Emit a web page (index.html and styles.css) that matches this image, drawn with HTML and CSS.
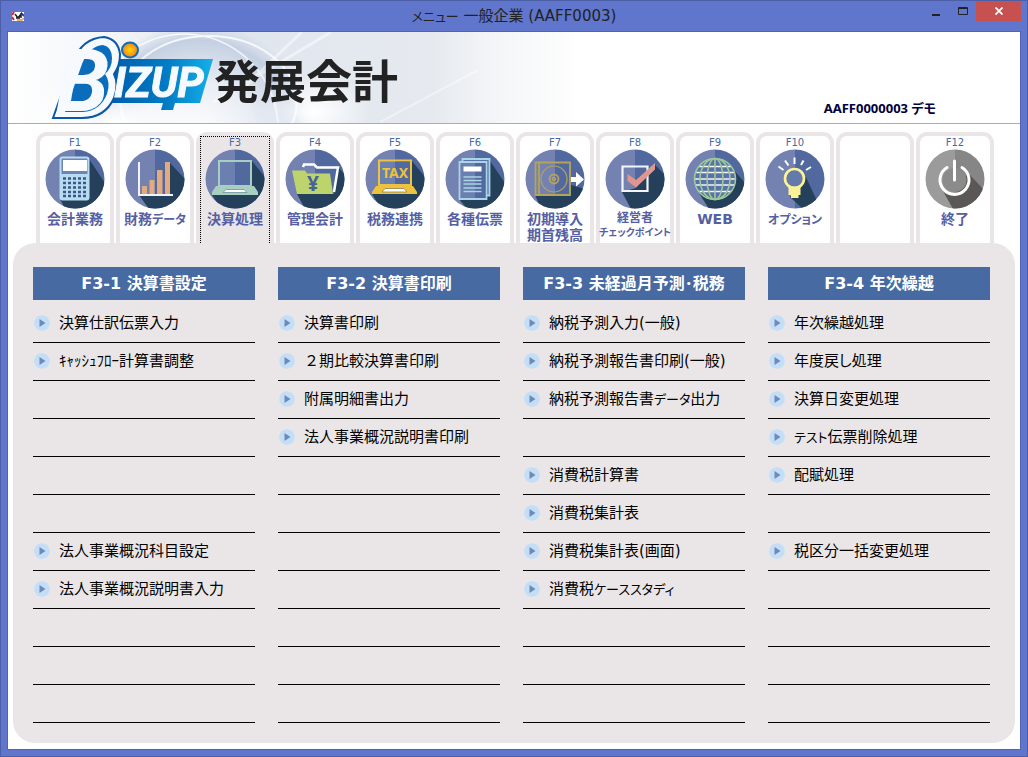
FILE: index.html
```html
<!DOCTYPE html>
<html lang="ja">
<head>
<meta charset="utf-8">
<title>メニュー 一般企業 (AAFF0003)</title>
<link rel="stylesheet" href="styles.css">
</head>
<body>
<svg class="defs" width="0" height="0" aria-hidden="true">
  <defs>
    <clipPath id="disc"><circle cx="30" cy="30" r="29.5"/></clipPath>
    <symbol id="bullet" viewBox="0 0 16 16"><circle cx="8" cy="8" r="7.8" fill="#c2dff7"/><path d="M5.500 4 11.500 8 5.500 12z" fill="#7089b8"/></symbol>
    <symbol id="base" viewBox="0 0 60 60"><path d="M0 0H30V60H0z" fill="#7382b0"/><path d="M30 0H60V60H30z" fill="#52699f"/></symbol>
  </defs>
</svg>
<div class="window">
  <div class="titlebar">
    <svg class="app-icon" viewBox="0 0 12 9" aria-hidden="true"><path d="M0 0h12v9H0z" fill="#fff"/><path d="M0 3 2 0M0 5l2 3" stroke="#c8203c" stroke-width="2"/><path d="M9 1l3 3" stroke="#2c3fa8" stroke-width="2"/><path d="M5 8h5l2-2" stroke="#f0923a" fill="none" stroke-width="1.500"/><path d="M3 2l3 4 3-4v4M4 6h4" stroke="#222" fill="none" stroke-width="1.500"/></svg>
    <h1 class="title"><span class="kana">メニュー</span> 一般企業 (AAFF0003)</h1>
    <div class="controls">
      <button class="ctl" aria-label="最小化"><svg width="8" height="14" viewBox="0 0 8 14"><path d="M0 10h8v2H0z" fill="#222"/></svg></button>
      <button class="ctl" aria-label="最大化"><svg width="10" height="14" viewBox="0 0 10 14"><path d="M.5 3.500h9v7h-9z" fill="none" stroke="#222"/><path d="M0 4.500h10" stroke="#222"/></svg></button>
      <button class="ctl close" aria-label="閉じる"><svg width="8" height="8" viewBox="0 0 8 8"><path d="M.5.5l7 7m0-7l-7 7" stroke="#fff" stroke-width="1.800"/></svg></button>
    </div>
  </div>
  <main class="client">
    <header class="banner">
      <svg class="swirl" viewBox="0 0 620 91" preserveAspectRatio="none" aria-hidden="true">
        <defs>
          <linearGradient id="wash"><stop offset="0" stop-color="#fff"/><stop offset=".16" stop-color="#f3f5f8"/><stop offset=".36" stop-color="#dfe5ee"/><stop offset=".52" stop-color="#e3e8ef"/><stop offset=".7" stop-color="#e6eaef"/><stop offset=".81" stop-color="#f5f6f8"/><stop offset=".95" stop-color="#fff"/></linearGradient>
          <radialGradient id="orb"><stop offset="0" stop-color="#fff"/><stop offset=".5" stop-color="#e9edf4"/><stop offset=".85" stop-color="#c4d0e2"/><stop offset="1" stop-color="#d2dbe8" stop-opacity="0"/></radialGradient>
          <radialGradient id="glow"><stop offset="0" stop-color="#fff"/><stop offset="1" stop-color="#fff" stop-opacity="0"/></radialGradient>
        </defs>
        <path d="M0 0H620V91H0z" fill="url(#wash)"/>
        <circle cx="195" cy="110" r="120" fill="url(#orb)"/>
        <ellipse cx="110" cy="90" rx="110" ry="44" fill="url(#glow)"/>
        <g fill="none" stroke="#fff" opacity=".8"><ellipse cx="205" cy="70" rx="90" ry="66" stroke-width="2"/><circle cx="180" cy="98" r="96" stroke-width="1.500"/><path d="M210 70 330 0M236 60 300 0" stroke-width="3" opacity=".6"/><path d="M380 90 480 38" stroke-width="2" opacity=".5"/></g>
        <ellipse cx="312" cy="80" rx="60" ry="40" fill="url(#glow)"/>
      </svg>
      <svg class="logo" viewBox="0 0 400 91" role="img" aria-label="BIZUP 発展会計">
        <defs>
          <linearGradient id="blue"><stop offset="0" stop-color="#005bab"/><stop offset=".55" stop-color="#007ac4"/><stop offset="1" stop-color="#16b0e8"/></linearGradient>
          <radialGradient id="sun"><stop offset="0" stop-color="#ffd800"/><stop offset="1" stop-color="#f58a1c"/></radialGradient>
        </defs>
        <path d="M107 27H205L192 71H167L165 78H153L155 71H98z" fill="url(#blue)"/>
        <path d="M45 86 65 30Q74 6 96 5 110 7 112 22 112 34 106 42 111 52 106 66 97 86 74 86z" fill="#f6faff" stroke="#0a57a5" stroke-width="2"/>
        <path d="M57 80 74 32Q81 14 95 13 104 15 104 26 104 36 97 42 103 50 99 62 92 79 75 80z" fill="#0a6cbb"/>
        <text class="logo-b" x="48" y="79">B</text>
        <text class="logo-izup" x="106" y="65">IZUP</text>
        <ellipse cx="122" cy="18" rx="9" ry="8.500" fill="#0a6fbb"/>
        <ellipse cx="122" cy="18" rx="7" ry="6.500" fill="url(#sun)"/>
        <text class="logo-name" x="206" y="66">発展会計</text>
      </svg>
      <p class="user">AAFF0000003 デモ</p>
    </header>
    <nav class="tabs" aria-label="メインメニュー">
      <button class="tab"><span class="key">F1</span>
        <svg class="icon" viewBox="0 0 60 60"><g clip-path="url(#disc)"><use href="#base"/><path d="M44 10 60 34V60H20L15 50z" fill="#24405a"/><rect x="15.500" y="8.500" width="28" height="42" rx="2" fill="#6f83b4" stroke="#b7dcf2" stroke-width="2"/><path d="M16 25h27v25H16z" fill="#b7dcf2"/><path d="M18 11h24v11H18z" fill="#fff"/><g stroke="#3d5784" stroke-width="2.500" stroke-dasharray="3 2"><path d="M18 29.500h24M18 34h24M18 38.500h24M18 43h24M18 47h24"/></g></g></svg>
        <span class="name">会計業務</span></button>
      <button class="tab"><span class="key">F2</span>
        <svg class="icon" viewBox="0 0 60 60"><g clip-path="url(#disc)"><use href="#base"/><path d="M45 14 60 30V60H24L14 46H45z" fill="#24405a"/><path d="M17 37h5v8h-5zM24.500 31h5v14h-5zM32 21h5.500v24H32zM40 13h5v32h-5z" fill="#e3aa80"/><path d="M14 13V46H48" fill="none" stroke="#f2f3fa" stroke-width="2"/></g></svg>
        <span class="name">財務<span class="kana">データ</span></span></button>
      <button class="tab active" aria-current="page"><span class="key">F3</span>
        <svg class="icon" viewBox="0 0 60 60"><g clip-path="url(#disc)"><use href="#base"/><path d="M47 12 60 28V60H16L7 46H47z" fill="#24405a"/><path d="M14 12H46V37H14z" fill="#6b7fb0" stroke="#a6cfc0" stroke-width="2"/><path d="M30 13H45V36H30z" fill="#52699f"/><path d="M11 37H49L53 43V46H7V43z" fill="#a6cfc0"/><path d="M21 40.500H39L42 43.500H18z" fill="#fff" stroke="#6c8fa0" stroke-width=".8"/></g></svg>
        <span class="name">決算処理</span></button>
      <button class="tab"><span class="key">F4</span>
        <svg class="icon" viewBox="0 0 60 60"><g clip-path="url(#disc)"><use href="#base"/><path d="M53 18 60 26V60H20L12 45H49z" fill="#24405a"/><path d="M18 18 19 15.500H29L32 18.500H53L49 43" fill="none" stroke="#fff" stroke-width="2.500"/><path d="M7 21.500H20L22 24.500H45L48 45H12z" fill="#bdd36b"/><text class="yen" x="28" y="42">¥</text></g></svg>
        <span class="name">管理会計</span></button>
      <button class="tab"><span class="key">F5</span>
        <svg class="icon" viewBox="0 0 60 60"><g clip-path="url(#disc)"><use href="#base"/><path d="M47 12 60 28V60H16L7 45H47z" fill="#24405a"/><path d="M14 11.500H46V36H14z" fill="#6b7fb0" stroke="#edc23c" stroke-width="2"/><path d="M30 12.500H45V35H30z" fill="#52699f"/><path d="M11 37H48L52 43V45H7V43z" fill="#edc23c"/><path d="M20 39.500H39L42 43H17z" fill="#fff" stroke="#8d8350" stroke-width=".8"/><text class="tax" x="30" y="29">TAX</text></g></svg>
        <span class="name">税務連携</span></button>
      <button class="tab"><span class="key">F6</span>
        <svg class="icon" viewBox="0 0 60 60"><g clip-path="url(#disc)"><use href="#base"/><path d="M45 12 60 34V60H22L14 50z" fill="#24405a"/><path d="M17.500 13V10H44.500V46.500H41.500" fill="#5c72a8" stroke="#a9d5e4" stroke-width="1.800"/><path d="M14.500 13H41.500V50H14.500z" fill="#6b7fb0" stroke="#a9d5e4" stroke-width="1.800"/><path d="M30 14H40.500V49H30z" fill="#52699f"/><path d="M18.500 17.500h18v5h-18z" fill="#fff"/><path d="M18.500 28h18M18.500 31.500h18M18.500 35h18M18.500 39h18M18.500 42.500h18" stroke="#a9d5e4" stroke-width="1.500"/></g></svg>
        <span class="name">各種伝票</span></button>
      <button class="tab"><span class="key">F7</span>
        <svg class="icon" viewBox="0 0 60 60"><g clip-path="url(#disc)"><use href="#base"/><path d="M46 36 60 40V60H16L10 46H46z" fill="#24405a"/><g fill="none" stroke="#b5a35b" stroke-width="1.800"><path d="M10.500 13.500H45V46H10.500zM14 14V46"/><circle cx="29" cy="30" r="13" stroke-width="1.200"/><circle cx="29" cy="30" r="4.500"/><circle cx="29" cy="30" r="1.500" stroke-width="1.500"/></g><path d="M46 28H51V23L59 30.500 51 37.500V33H46z" fill="#fff"/></g></svg>
        <span class="name">初期導入<br>期首残高</span></button>
      <button class="tab"><span class="key">F8</span>
        <svg class="icon" viewBox="0 0 60 60"><g clip-path="url(#disc)"><use href="#base"/><path d="M50 16 60 26V60H26L17 43 31 39z" fill="#24405a"/><path d="M17.500 17.500H42.500V42H17.500z" fill="none" stroke="#f4f5fb" stroke-width="2.200"/><path d="M22.500 25 31 31 50 14V20.500L31 38.500 22.500 32z" fill="#e0968e"/></g></svg>
        <span class="name small">経営者<br><span class="kana">チェックポイント</span></span></button>
      <button class="tab"><span class="key">F9</span>
        <svg class="icon" viewBox="0 0 60 60"><g clip-path="url(#disc)"><use href="#base"/><path d="M48 20 60 34V60H24L14 44z" fill="#24405a"/><circle cx="30" cy="30" r="20" fill="#5b71a7"/><path d="M14 17.500H46M10 23.500H50M10 30H50M10 36H50M14 42.500H46" stroke="#f4f6fa" stroke-width="1.500"/><g fill="none" stroke="#9ccb97" stroke-width="1.600"><circle cx="30" cy="30" r="20.500"/><ellipse cx="30" cy="30" rx="15" ry="20.500"/><ellipse cx="30" cy="30" rx="8" ry="20.500"/><path d="M30 9.500V50.500"/></g></g></svg>
        <span class="name">WEB</span></button>
      <button class="tab"><span class="key">F10</span>
        <svg class="icon" viewBox="0 0 60 60"><g clip-path="url(#disc)"><use href="#base"/><path d="M41 28 52 52 38 60 25 48 32 38z" fill="#24405a"/><circle cx="29.500" cy="29.500" r="9.500" fill="#647aad" stroke="#fdf396" stroke-width="2.600"/><path d="M23.500 37.500H35.500V46H33.500V49H26V46H23.500z" fill="#fdf396"/><path d="M13.500 17.500 18.500 21M20 11.500 23.500 16.500M29.500 8.500V15M38.500 11.500 36 16M46 18 41 21" stroke="#fff" stroke-width="2"/></g></svg>
        <span class="name"><span class="kana">オプション</span></span></button>
      <button class="tab" aria-label="F11"></button>
      <button class="tab"><span class="key">F12</span>
        <svg class="icon" viewBox="0 0 60 60"><g clip-path="url(#disc)"><path d="M0 0H30V60H0z" fill="#9b9b9b"/><path d="M30 0H60V60H30z" fill="#868686"/><path d="M43 24 60 42V60H28L18 42 30 46z" fill="#5b5757"/><circle cx="29.500" cy="31" r="12" fill="#8b8b8b"/><path d="M22 18.500A14.500 14.500 0 1 0 37 18.500" fill="none" stroke="#fff" stroke-width="3" stroke-linecap="round"/><path d="M29.500 12V31" stroke="#fff" stroke-width="3" stroke-linecap="round"/></g></svg>
        <span class="name">終了</span></button>
    </nav>
    <div class="panel">
      <section class="column"><h2>F3-1 決算書設定</h2>
        <ul>
          <li><a href="#"><svg><use href="#bullet"/></svg>決算仕訳伝票入力</a></li>
          <li><a href="#"><svg><use href="#bullet"/></svg>ｷｬｯｼｭﾌﾛｰ計算書調整</a></li>
          <li></li><li></li><li></li><li></li>
          <li><a href="#"><svg><use href="#bullet"/></svg>法人事業概況科目設定</a></li>
          <li><a href="#"><svg><use href="#bullet"/></svg>法人事業概況説明書入力</a></li>
          <li></li><li></li><li></li>
        </ul></section>
      <section class="column"><h2>F3-2 決算書印刷</h2>
        <ul>
          <li><a href="#"><svg><use href="#bullet"/></svg>決算書印刷</a></li>
          <li><a href="#" class="full"><svg><use href="#bullet"/></svg>２期比較決算書印刷</a></li>
          <li><a href="#"><svg><use href="#bullet"/></svg>附属明細書出力</a></li>
          <li><a href="#"><svg><use href="#bullet"/></svg>法人事業概況説明書印刷</a></li>
          <li></li><li></li><li></li><li></li><li></li><li></li><li></li>
        </ul></section>
      <section class="column"><h2>F3-3 未経過月予測･税務</h2>
        <ul>
          <li><a href="#"><svg><use href="#bullet"/></svg>納税予測入力(一般)</a></li>
          <li><a href="#"><svg><use href="#bullet"/></svg>納税予測報告書印刷(一般)</a></li>
          <li><a href="#"><svg><use href="#bullet"/></svg><span>納税予測報告書<span class="kana">データ</span>出力</span></a></li>
          <li></li>
          <li><a href="#"><svg><use href="#bullet"/></svg>消費税計算書</a></li>
          <li><a href="#"><svg><use href="#bullet"/></svg>消費税集計表</a></li>
          <li><a href="#"><svg><use href="#bullet"/></svg>消費税集計表(画面)</a></li>
          <li><a href="#"><svg><use href="#bullet"/></svg><span>消費税<span class="kana">ケーススタディ</span></span></a></li>
          <li></li><li></li><li></li>
        </ul></section>
      <section class="column"><h2>F3-4 年次繰越</h2>
        <ul>
          <li><a href="#"><svg><use href="#bullet"/></svg>年次繰越処理</a></li>
          <li><a href="#"><svg><use href="#bullet"/></svg>年度戻し処理</a></li>
          <li><a href="#"><svg><use href="#bullet"/></svg>決算日変更処理</a></li>
          <li><a href="#"><svg><use href="#bullet"/></svg><span><span class="kana">テスト</span>伝票削除処理</span></a></li>
          <li><a href="#"><svg><use href="#bullet"/></svg>配賦処理</a></li>
          <li></li>
          <li><a href="#"><svg><use href="#bullet"/></svg>税区分一括変更処理</a></li>
          <li></li><li></li><li></li><li></li>
        </ul></section>
    </div>
  </main>
</div>
</body>
</html>
```
FILE: styles.css
```css
* { box-sizing: border-box; }
body {
  margin: 0;
  font-family: "DejaVu Sans", "Noto Sans CJK JP", sans-serif;
  font-feature-settings: "palt";
  color: #000;
}
button { font: inherit; font-feature-settings: inherit; color: inherit; border: 0; padding: 0; background: none; cursor: pointer; }
h1, h2, p, ul { margin: 0; padding: 0; }
.defs { position: absolute; }
.window {
  min-height: 100vh;
  display: flex;
  flex-direction: column;
  background: #5f76cc;
  border: 1px solid #4c5fa6;
  padding: 0 6px 6px;
}
.titlebar {
  height: 30px;
  display: grid;
  grid-template-columns: 1fr auto 1fr;
  align-items: center;
}
.app-icon { width: 12px; height: 9px; margin-left: 5px; }
.title { font-size: 15px; line-height: 30px; font-weight: 400; color: #222; }
.title .kana, .column .kana { font-size: 13px; }
.controls { align-self: start; justify-self: end; display: flex; }
.ctl { width: 27px; height: 20px; display: flex; align-items: center; justify-content: center; }
.ctl.close { width: 45px; background: #c75050; }
.client {
  flex: 1;
  background: #fff;
  border: 1px solid #4f65b4;
  padding-bottom: 6px;
}
.banner {
  position: relative;
  height: 92px;
  border-bottom: 1px solid #a9adb3;
  display: flex;
  justify-content: space-between;
  align-items: flex-end;
}
.swirl { position: absolute; left: 0; top: 0; width: 60%; height: 100%; }
.logo { position: relative; width: 400px; height: 91px; overflow: visible; }
.logo-b { font: italic bold 86px Roboto, sans-serif; fill: #f6faff; }
.logo-izup { font: italic bold 42px Roboto, sans-serif; fill: #f6faff; stroke: #f6faff; stroke-width: 1px; }
.logo-name { font: bold 46px "Noto Sans CJK JP", sans-serif; font-feature-settings: normal; fill: #222; }
.user {
  position: relative;
  padding: 0 84px 6px 0;
  font-family: "Noto Sans", "Noto Sans CJK JP", sans-serif;
  font-size: 13px;
  line-height: 18px;
  font-weight: 700;
  color: #00003c;
}
.tabs {
  display: grid;
  grid-template-columns: repeat(12, minmax(0, 1fr));
  gap: 2px;
  padding: 8px 26px 0 28px;
}
.tab {
  position: relative;
  height: 111px;
  display: flex;
  flex-direction: column;
  align-items: center;
  border: 4px solid #eae6e7;
  border-bottom: 0;
  border-radius: 11px 11px 0 0;
  background: #fff;
  color: #565fa3;
}
.tab.active { background: #eae6e7; }
.tab.active::before {
  content: "";
  position: absolute;
  inset: 0;
  border: 1px dotted #000;
  border-bottom: 0;
}
.key { font-size: 10px; line-height: 13px; color: #466aa1; }
.icon { width: 60px; height: 60px; flex: none; }
.name { margin-top: 2px; font-size: 14px; line-height: 16px; font-weight: 700; white-space: nowrap; }
.name .kana { font-size: 12px; }
.name.small { font-size: 12px; line-height: 14px; }
.name.small .kana { font-size: 10px; }
.yen { font: bold 21px "Noto Sans", sans-serif; fill: #47629a; text-anchor: middle; }
.tax { font: bold 14px "Noto Sans", sans-serif; fill: #edc23c; text-anchor: middle; }
.panel {
  margin: 0 5px;
  padding: 24px 25px 20px 20px;
  border-radius: 22px;
  background: #eae6e7;
  display: grid;
  grid-template-columns: repeat(4, minmax(0, 1fr));
  gap: 23px;
}
.column h2 {
  background: #466aa1;
  color: #fff;
  font-size: 16px;
  line-height: 33px;
  text-align: center;
  white-space: nowrap;
}
.column ul { list-style: none; padding-top: 5px; }
.column li { height: 38px; border-bottom: 1px solid #000; }
.column a {
  display: flex;
  align-items: center;
  gap: 9px;
  height: 36px;
  padding-left: 1px;
  font-size: 15px;
  line-height: 22px;
  color: #000;
  text-decoration: none;
  white-space: nowrap;
}
.column a.full { font-feature-settings: normal; }
.column a svg { width: 16px; height: 16px; flex: none; }
```
